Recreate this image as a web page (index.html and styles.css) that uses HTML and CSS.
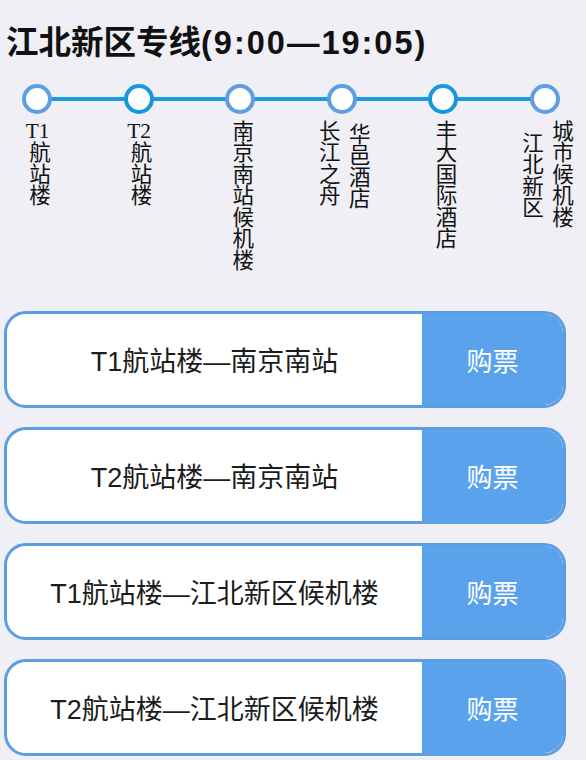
FILE: index.html
```html
<!DOCTYPE html>
<html lang="zh-CN">
<head>
<meta charset="utf-8">
<title>江北新区专线</title>
<link rel="stylesheet" href="styles.css">
</head>
<body>
  <h1 class="title">江北新区专线<span class="hours">(9:00—19:05)</span></h1>

  <div class="route">
    <div class="stop">
      <span class="dot"></span>
      <div class="names"><span class="name"><span class="latin">T1</span>航站楼</span></div>
    </div>
    <div class="stop">
      <span class="dot dot-major"></span>
      <div class="names"><span class="name"><span class="latin">T2</span>航站楼</span></div>
    </div>
    <div class="stop">
      <span class="dot"></span>
      <div class="names"><span class="name">南京南站候机楼</span></div>
    </div>
    <div class="stop">
      <span class="dot"></span>
      <div class="names">
        <span class="name">长江之舟</span>
        <span class="name name-low">华邑酒店</span>
      </div>
    </div>
    <div class="stop">
      <span class="dot dot-major"></span>
      <div class="names"><span class="name">丰大国际酒店</span></div>
    </div>
    <div class="stop">
      <span class="dot"></span>
      <div class="names">
        <span class="name name-lower">江北新区</span>
        <span class="name">城市候机楼</span>
      </div>
    </div>
  </div>

  <ul class="trips">
    <li class="trip"><span class="trip-name">T1航站楼—南京南站</span><button class="buy">购票</button></li>
    <li class="trip"><span class="trip-name">T2航站楼—南京南站</span><button class="buy">购票</button></li>
    <li class="trip"><span class="trip-name">T1航站楼—江北新区候机楼</span><button class="buy">购票</button></li>
    <li class="trip"><span class="trip-name">T2航站楼—江北新区候机楼</span><button class="buy">购票</button></li>
  </ul>
</body>
</html>
```

FILE: styles.css
```css
* {
  box-sizing: border-box;
}

body {
  margin: 0;
  background: #efeff5;
  font-family: "Liberation Sans", "Noto Sans CJK SC", sans-serif;
  color: #1f1f1f;
}

.title {
  margin: 23px 0 0 6px;
  font-size: 32.5px;
  font-weight: 700;
  line-height: 40px;
  color: #111;
}

.hours {
  letter-spacing: 2px;
}

/* line of stops */
.route {
  position: relative;
  display: flex;
  justify-content: space-between;
  margin-top: 21px;
  padding: 0 26px 0 22px;
}

.route::before {
  content: "";
  position: absolute;
  left: 37px;
  right: 42px;
  top: 13px;
  height: 4px;
  background: #1b9ae0;
}

.stop {
  position: relative;
  width: 30px;
  display: flex;
  flex-direction: column;
  align-items: center;
}

.dot {
  width: 30px;
  height: 30px;
  border-radius: 50%;
  border: 4px solid #5d9fe2;
  background: #fff;
}

.dot-major {
  border-color: #1897dc;
}

.names {
  display: flex;
  gap: 7px;
  margin-top: 6px;
  white-space: nowrap;
}

.name {
  writing-mode: vertical-rl;
  font-family: "Liberation Serif", "Noto Sans CJK SC", serif;
  font-size: 21.5px;
  line-height: 23px;
  color: #111;
}

.name-low {
  margin-top: 3px;
}

.name-lower {
  margin-top: 12px;
}

.latin {
  text-combine-upright: all;
}

/* trip cards */
.trips {
  list-style: none;
  margin: 40px 20px 0 4px;
  padding: 0;
  display: flex;
  flex-direction: column;
  gap: 19px;
}

.trip {
  display: flex;
  height: 97px;
  border: 3.5px solid #5c9ee2;
  border-radius: 22px;
  background: #fff;
  overflow: hidden;
}

.trip-name {
  flex: 1;
  display: flex;
  align-items: center;
  justify-content: center;
  font-size: 27px;
  color: #1c1c1c;
}

.buy {
  width: 141px;
  border: 0;
  margin: 0;
  padding: 0;
  background: #5aa3ec;
  color: #fff;
  font-family: inherit;
  font-size: 26px;
}
```
